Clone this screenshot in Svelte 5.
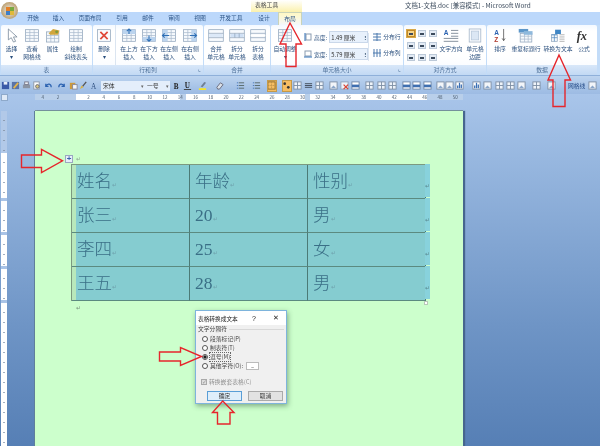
<script>
  const tabs = [['开始',24],['插入',27],['页面布局',36],['引用',28],['邮件',24],['审阅',28],['视图',24],['开发工具',38],['设计',28]];

  const groups = [
    { name: '表', w: 91, items: [
      { icon: 'cursor', l: ['选择', '▾'], w: 21 }, { icon: 'grid', l: ['查看', '网格线'], w: 20 },
      { icon: 'props', l: ['属性'], w: 21 }, { icon: 'diag', l: ['绘制', '斜线表头'], w: 26 } ] },
    { name: '行和列', w: 110, corner: true, items: [
      { icon: 'del', l: ['删除', '▾'], w: 23, sep: true }, { icon: 'above', l: ['在上方', '插入'], w: 20, ml: 3 },
      { icon: 'below', l: ['在下方', '插入'], w: 20 }, { icon: 'left', l: ['在左侧', '插入'], w: 20 },
      { icon: 'right', l: ['在右侧', '插入'], w: 20, ml: 1 } ] },
    { name: '合并', w: 66, items: [
      { icon: 'merge', l: ['合并', '单元格'], w: 21, ml: 1.5 }, { icon: 'split', l: ['拆分', '单元格'], w: 21 },
      { icon: 'tsplit', l: ['拆分', '表格'], w: 21 } ] }
  ];

  const dataItems = [
    { icon: 'sort', l: ['排序'], w: 22, ml: 2 }, { icon: 'repeat', l: ['重复标题行'], w: 30 },
    { icon: 'conv', l: ['转换为文本'], w: 34 }, { icon: 'fx', l: ['公式'], w: 18 }
  ];

  const leftTools = [['save',10],['saveas',10.5],['print',11],['preview',10.5],['undo',12],['redo',14],['paste',10],['brush',11],['font',10]];
  const midRaw = [['bold',176],['under',187],['hl',202],['clear',219],['list',240.7],['list',256.7],['border',272],['dots',287],['tbl',297.7],['bar',309],['tbl',320],['img',334],['del2',345],['tblb',356],['tbl',370],['tbl',381.7],['tbl',393],['tblb',406.7],['tblb',416.7],['tblb',428],['img',440.7],['img',450],['chart',460],['chart',476.7],['img',488],['tbl',500],['tbl',510.7],['img',521.7],['tbl',537],['img',552]];
  let prevEnd = 170;
  const midTools = midRaw.map(([k, c]) => {
    const ml = c - 5 - prevEnd;
    prevEnd = c + 5;
    return [k, 10, ml];
  });

  const rows = [['姓名','年龄','性别'],['张三','20','男'],['李四','25','女'],['王五','28','男']];
  const hTicks = ['4','2','','2','4','6','8','10','12','14','16','18','20','22','24','26','28','30','32','34','36','38','40','42','44','46','48','50'];
  const aligns = [0,1,2,3,4,5,6,7,8];
  const radios = [['段落标记(P)',false],['制表符(T)',false],['逗号(M)',true],['其他字符(O):',false]];
</script>

{#snippet glyph(k)}
  <svg viewBox="0 0 22 20" class="big">
    {#if k === 'cursor'}
      <path d="M6 1v15l4-3 3 6 3-1-3-6h5z" fill="#fff" stroke="#6d7f92"/>
    {:else if k === 'fx'}
      <text x="1" y="16" class="fx">fx</text>
    {:else if k === 'sort'}
      <text x="3" y="9" class="az a">A</text><text x="3" y="19.5" class="az z">Z</text>
      <path d="M16 1v16m-2-3l2 3 2-3" stroke="#444" fill="none"/>
    {:else if k === 'del'}
      <rect x="2" y="2" width="18" height="16" fill="#fbfcfe" stroke="#8ea3ba"/>
      <path d="M6 5l10 10M16 5L6 15" stroke="#e04a3a" stroke-width="2.4"/>
    {:else if k === 'props'}
      <rect x="2" y="5" width="17" height="14" fill="#f4f8fc" stroke="#8ea3ba"/>
      <path d="M2 10h17M2 14h17M8 5v14M13 5v14" stroke="#a9bace"/>
      <path d="M5 7l6-6 9 2-2 6H7z" fill="#d1a63e"/><circle cx="16" cy="5" r="2" fill="#7e9a3a"/>
    {:else if k === 'merge' || k === 'split' || k === 'tsplit'}
      <rect x="1" y="2" width="20" height="16" fill="#f7fafd" stroke="#8ea3ba"/>
      <path d="M1 7h20M1 13h20" stroke="#8ea3ba"/>
      {#if k === 'split'}<rect x="2" y="8" width="18" height="4" fill="#cfe0f5"/><path d="M8 7v6M14 7v6" stroke="#8ea3ba"/>{/if}
      {#if k === 'merge'}<rect x="2" y="8" width="18" height="4" fill="#dce9f8"/>{/if}
      {#if k === 'tsplit'}<rect x="1" y="9" width="20" height="2" fill="#fff"/>{/if}
    {:else if k === 'repeat'}
      <rect x="3" y="7" width="16" height="12" fill="#f7fafd" stroke="#8ea3ba"/><path d="M3 11h16M3 15h16M9 7v12M14 7v12" stroke="#a9bace"/>
      <rect x="1" y="1" width="13" height="5" fill="#5d97c9"/><rect x="8" y="4" width="12" height="5" fill="#8fb9dc"/>
    {:else if k === 'conv'}
      <rect x="2" y="9" width="8" height="9" fill="#f4f8fc" stroke="#8ea3ba"/>
      <path d="M13 9h7M13 12h7M13 15h7M13 18h7" stroke="#9a9a9a"/>
      <rect x="7" y="2" width="8" height="6" fill="#3f86c5"/><path d="M2 9h8M2 13h8M6 9v9" stroke="#4f8ac0"/>
    {:else}
      <rect x="2" y="2" width="18" height="16" fill="#f7fafd" stroke="#8ea3ba"/>
      <path d="M2 6h18M2 10h18M2 14h18M8 2v16M14 2v16" stroke="#a9bace"/>
      {#if k === 'above'}<rect x="2" y="2" width="18" height="6" fill="#bcd4ee"/><path d="M11 8V1m-3 3l3-3 3 3" stroke="#2f6fb5" fill="none" stroke-width="1.5"/>{/if}
      {#if k === 'below'}<rect x="2" y="12" width="18" height="6" fill="#bcd4ee"/><path d="M11 10v8m-3-3l3 3 3-3" stroke="#2f6fb5" fill="none" stroke-width="1.5"/>{/if}
      {#if k === 'left'}<rect x="2" y="2" width="7" height="16" fill="#bcd4ee"/><path d="M11 10H2m3-3l-3 3 3 3" stroke="#2f6fb5" fill="none" stroke-width="1.5"/>{/if}
      {#if k === 'right'}<rect x="13" y="2" width="7" height="16" fill="#bcd4ee"/><path d="M11 10h9m-3-3l3 3-3 3" stroke="#2f6fb5" fill="none" stroke-width="1.5"/>{/if}
    {/if}
  </svg>
{/snippet}

{#snippet tool(k, w = 10, ml = 0)}
  <span class="tool" class:on={k === 'border' || k === 'dots'} style="width:{w}px;margin-left:{ml}px">
    <svg viewBox="0 0 10 10">
      {#if k === 'save'}<rect x="1" y="1" width="8" height="8" fill="#3b5aa8"/><rect x="3" y="1" width="4" height="3" fill="#e8eef8"/>
      {:else if k === 'saveas'}<rect x="1" y="1" width="8" height="8" fill="#5a74a8"/><path d="M3 8l5-6" stroke="#e2b34a" stroke-width="2"/>
      {:else if k === 'print'}<rect x="1" y="4" width="8" height="4" fill="#8b94a3"/><rect x="3" y="1" width="4" height="3" fill="#eef1f6" stroke="#778"/>
      {:else if k === 'preview'}<rect x="2" y="1" width="6" height="8" fill="#fdfdfd" stroke="#8894a6"/><circle cx="6" cy="6" r="2" fill="#d8c77c" stroke="#667"/>
      {:else if k === 'undo'}<path d="M2 3v3h3M2 6c2-4 6-3 6 1" fill="none" stroke="#2b62b0" stroke-width="1.4"/>
      {:else if k === 'redo'}<path d="M8 3v3H5M8 6C6 2 2 3 2 7" fill="none" stroke="#2b62b0" stroke-width="1.4"/>
      {:else if k === 'paste'}<rect x="1" y="2" width="6" height="7" fill="#cc9a3e"/><rect x="4" y="4" width="5" height="5" fill="#f6f7fa" stroke="#889"/>
      {:else if k === 'brush'}<path d="M8 1L4 6" stroke="#555" stroke-width="1.5"/><path d="M1 9l2-4 2 2z" fill="#dcb23c"/>
      {:else if k === 'font'}<text x="1" y="9" class="mini">A</text>
      {:else if k === 'bold'}<text x="2" y="8.5" class="mini b">B</text>
      {:else if k === 'under'}<text x="2" y="8" class="mini b">U</text><path d="M1 9.5h8" stroke="#333"/>
      {:else if k === 'hl'}<path d="M3 6l4-5 2 1-4 5z" fill="#6f7f93"/><rect x="1" y="8" width="8" height="2" fill="#f5e52b"/>
      {:else if k === 'clear'}<path d="M2 7l4-5 3 2-4 5H3z" fill="#d9e0e9" stroke="#667"/>
      {:else if k === 'list'}<path d="M3 2h6M3 5h6M3 8h6" stroke="#566"/><path d="M1 2h1M1 5h1M1 8h1" stroke="#2b62b0"/>
      {:else if k === 'border'}<rect x="1" y="1" width="8" height="8" fill="none" stroke="#8a6a2a"/><path d="M1 5h8M5 1v8" stroke="#b28b45" stroke-dasharray="1 1"/>
      {:else if k === 'dots'}<circle cx="3" cy="3" r="1.5" fill="#333"/><circle cx="7" cy="7" r="1.5" fill="#333"/>
      {:else if k === 'bar'}<path d="M1 3h8M1 5h8M1 7h8" stroke="#3c4654"/>
      {:else if k === 'del2'}<rect x="1" y="1" width="8" height="8" fill="#eef3f9" stroke="#8ea3ba"/><path d="M4 4l5 5M9 4L4 9" stroke="#d9402f" stroke-width="1.3"/>
      {:else if k === 'tblb'}<rect x="1" y="1" width="8" height="8" fill="#fff" stroke="#6f87a6"/><rect x="1" y="4" width="8" height="3" fill="#3f6fb0"/>
      {:else if k === 'img'}<rect x="1" y="1" width="8" height="8" fill="#f2f5f9" stroke="#7d8ea4"/><path d="M2 8l3-3 3 3z" fill="#8aa6c9"/>
      {:else if k === 'chart'}<rect x="1" y="1" width="8" height="8" fill="#fff" stroke="#7d8ea4"/><path d="M3 8V5M5 8V2M7 8V4" stroke="#3b6fb3" stroke-width="1.4"/>
      {:else}<rect x="1" y="1" width="8" height="8" fill="#eef3f9" stroke="#7d8ea4"/><path d="M1 5h8M5 1v8" stroke="#7d8ea4"/>{/if}
    </svg>
  </span>
{/snippet}

{#snippet item(it)}
  <div class="item" class:sep={it.sep} style="width:{it.w}px;margin-left:{it.ml ?? 0}px">
    {@render glyph(it.icon)}
    {#each it.l as t}<span>{t}</span>{/each}
  </div>
{/snippet}

<div class="app">
  <header class="title">
    <div class="orb"><i></i><i></i><i></i><i></i></div>
    <div class="ctx">表格工具</div>
    <div class="doc">文档1-文档.doc [兼容模式] - Microsoft Word</div>
  </header>

  <nav class="tabs">
    {#each tabs as [t, w]}<span style="width:{w}px">{t}</span>{/each}
    <span class="layout">布局</span>
  </nav>

  <section class="ribbon">
    {#each groups as g}
      <div class="group" style="width:{g.w}px">
        <div class="items">{#each g.items as it}{@render item(it)}{/each}</div>
        <div class="gname">{g.name}{#if g.corner}<b>⌞</b>{/if}</div>
      </div>
    {/each}

    <div class="group size">
      <div class="items">
        <div class="item auto">{@render glyph('grid')}<span>自动调整</span><span>▾</span></div>
        <div class="dims">
          <div class="dim">
            <svg viewBox="0 0 8 8"><rect x="2" y="1" width="5" height="6" fill="#fff" stroke="#8a9bb0"/><path d="M1 0v8" stroke="#2f6fb5"/></svg>
            <em>高度:</em><span class="spin">1.49 厘米<b>⁝</b></span>
          </div>
          <div class="dim">
            <svg viewBox="0 0 8 8"><rect x="1" y="1" width="6" height="5" fill="#fff" stroke="#8a9bb0"/><path d="M0 7h8" stroke="#2f6fb5"/></svg>
            <em>宽度:</em><span class="spin">5.79 厘米<b>⁝</b></span>
          </div>
        </div>
        <div class="dist">
          <div><svg viewBox="0 0 8 8"><path d="M0 1h8M0 4h8M0 7h8M4 0v8" stroke="#4a78ad"/></svg>分布行</div>
          <div><svg viewBox="0 0 8 8"><path d="M1 0v8M4 0v8M7 0v8M0 4h8" stroke="#4a78ad"/></svg>分布列</div>
        </div>
      </div>
      <div class="gname">单元格大小<b>⌞</b></div>
    </div>

    <div class="group align">
      <div class="items">
        <div class="cells">
          {#each aligns as a}<i class:sel={a === 0}><u></u></i>{/each}
        </div>
        <div class="item tdir">
          <svg viewBox="0 0 22 20" class="big"><text x="1" y="10" class="az a">A</text><path d="M11 3h10M11 7h10M11 11h10M1 14h20M1 18h20" stroke="#5d6b7c"/></svg>
          <span>文字方向</span>
        </div>
        <div class="item tmargin">
          <svg viewBox="0 0 22 20" class="big"><rect x="3" y="1" width="16" height="18" fill="#f5f8fc" stroke="#9fb0c4"/><rect x="6" y="4" width="10" height="12" fill="#dce7f4" stroke="#b8c8da"/></svg>
          <span>单元格</span><span>边距</span>
        </div>
      </div>
      <div class="gname">对齐方式</div>
    </div>

    <div class="group data">
      <div class="items">{#each dataItems as it}{@render item(it)}{/each}</div>
      <div class="gname">数据</div>
    </div>
  </section>

  <section class="toolbar">
    {#each leftTools as [t, w]}{@render tool(t, w)}{/each}
    <span class="combo font">宋体<b>▾</b></span>
    <span class="combo sz">一号<b>▾</b></span>
    {#each midTools as [t, w, ml]}{@render tool(t, w, ml)}{/each}
    <span class="gridline">网格线</span>
    {@render tool('img', 10, 0)}
  </section>

  <main class="work">
    <div class="hruler">
      <span class="corner"></span>
      <div class="hbar">
        {#each hTicks as t}<span>{t}</span>{/each}
      </div>
    </div>

    <div class="body">
      <aside class="vruler">
        <i class="m1"></i><i class="w1"></i><i class="g"></i><i class="w2"></i><i class="g"></i><i class="w2"></i><i class="g"></i><i class="w2"></i><i class="g"></i><i class="w3"></i>
      </aside>

      <article class="page">
        <div class="anchorline"><span class="handle">+</span><span class="mark">↵</span></div>
        <div class="tablewrap">
          <div class="table">
            {#each rows as r}
              {#each r as c, i}
                <div class="cell" class:first={i === 0}>{c}<small>↵</small></div>
              {/each}
            {/each}
          </div>
          <div class="ends">
            {#each rows as r}<div>↵</div>{/each}
          </div>
        </div>
        <div class="resize"></div>
        <div class="after">↵</div>

        <div class="dialog">
          <div class="dtitle"><span>表格转换成文本</span><b>?</b><b class="x">✕</b></div>
          <div class="dbody">
            <div class="legend"><span>文字分隔符</span><hr /></div>
            {#each radios as [t, on]}
              <label class="radio" class:on>
                <i></i><span>{t}</span>
                {#if t.startsWith('其他')}<em>–</em>{/if}
              </label>
            {/each}
            <div class="check"><i>✓</i>转换嵌套表格(C)</div>
            <div class="btns"><button class="ok">确定</button><button>取消</button></div>
          </div>
        </div>
      </article>
    </div>
  </main>

  <svg class="arrows" viewBox="0 0 600 446">
    <path d="M21.5 155H41.5V149.5L62.5 160.8L41.5 172.5V167.5H21.5Z"/>
    <path d="M290 23L301.5 44H296V66.5H286V44H280Z"/>
    <path d="M559 55L570.5 80H565V106.5H553V80H548Z"/>
    <path d="M159.5 352H180.5V347.5L201.5 356.5L180.5 365.5V361H159.5Z"/>
    <path d="M222.7 401L234 412.5H230V424H217.5V412.5H212.5Z"/>
  </svg>
</div>

<style>
  :global(body) { margin: 0; background: #9fbde4; }
  .app {
    position: relative; width: 600px; height: 446px; overflow: hidden;
    font-family: "Noto Sans CJK SC", "Noto Sans", sans-serif; color: #25426b;
    display: flex; flex-direction: column; filter: blur(0.35px);
  }

  .title { height: 12px; background: #fff; position: relative; display: flex; flex: none; }
  .orb {
    position: absolute; left: 1px; top: 2px; width: 17px; height: 17px; border-radius: 50%; z-index: 2;
    background: radial-gradient(circle at 50% 50%, #f3f3ee, #b89b6a 75%, #7a6a55);
    display: grid; grid-template-columns: 4px 4px; grid-auto-rows: 4px; place-content: center;
  }
  .orb i { background: #e57f25; }
  .orb i:nth-child(2) { background: #78a940; }
  .orb i:nth-child(3) { background: #3f7fc6; }
  .orb i:nth-child(4) { background: #e0b93a; }
  .ctx {
    margin-left: 251px; width: 51px; height: 12px; line-height: 9px; font-size: 5.8px; text-indent: 4px; color: #444;
    background: linear-gradient(#fff, #fbf1ad);
  }
  .doc { margin-left: 103px; font-size: 6.4px; line-height: 11px; color: #3b4a5c; white-space: nowrap; }

  .tabs { height: 13px; flex: none; display: flex; background: #bcd8fb; font-size: 5.8px; line-height: 12px; padding-left: 21px; }
  .tabs span { display: block; text-align: center; flex: none; color: #2d5587; }
  .tabs .layout { width: 24px; background: linear-gradient(#fff8c4, #f4f7fb); border: 1px solid #c9d3b9; border-bottom: 0; box-sizing: border-box; }

  .ribbon {
    height: 50px; flex: none; display: flex; gap: 1px; padding-left: 1px; box-sizing: border-box;
    background: #c3dcf8;
  }
  .group {
    display: flex; flex-direction: column; flex: none; border-radius: 2px;
    background: linear-gradient(#f4f9ff, #fff 12%, #fff 60%, #f6faff);
  }
  .items { flex: 1; display: flex; min-height: 0; }
  .gname {
    height: 10px; flex: none; font-size: 5.8px; line-height: 9px; text-align: center; color: #4c6f98;
    background: linear-gradient(#d8e7f9, #c2d9f4); position: relative;
  }
  .gname b { position: absolute; right: 2px; top: -1px; font-weight: 400; font-size: 5.8px; }
  .item {
    display: flex; flex-direction: column; align-items: center; flex: none; box-sizing: border-box;
    font-size: 5.8px; line-height: 8px; color: #2a4f7d; white-space: nowrap;
  }
  .item.sep { border-right: 1px solid #dbe5f1; }
  .big { width: 16px; height: 15px; margin: 3px 0 2px; flex: none; }
  .fx { font: italic bold 17px "Liberation Serif", serif; fill: #333; }
  .az { font: bold 9px "Liberation Sans", sans-serif; }
  .az.a { fill: #2b62b0; } .az.z { fill: #b23a2e; }
  .mini { font: 8px "Liberation Serif", serif; fill: #2f4f7f; }
  .mini.b { font-weight: bold; fill: #222; }

  .size { width: 132px; }
  .auto { width: 28px; }
  .dims { display: flex; flex-direction: column; gap: 5px; margin: 6px 0 0 5px; flex: none; }
  .dim { display: flex; align-items: center; font-size: 5.8px; white-space: nowrap; height: 12px; }
  .dim svg { width: 8px; height: 8px; flex: none; }
  .dim em { font-style: normal; margin: 0 2px 0 2px; color: #2a4f7d; }
  .spin {
    width: 39px; height: 12px; line-height: 11px; box-sizing: border-box; background: #e8f1fc; border: 1px solid #cad8ea;
    font-size: 5.8px; padding-left: 1px; color: #333; display: flex; justify-content: space-between; white-space: nowrap; flex: none;
  }
  .spin b { font-weight: 700; color: #23415f; padding-right: 1px; }
  .dist {
    display: flex; flex-direction: column; gap: 8px; margin: 8px 0 0 0; padding-left: 4px; flex: none;
    font-size: 5.8px; line-height: 8px; color: #2a4f7d; white-space: nowrap; border-left: 1px solid #dbe5f1; height: 28px;
  }
  .dist div { display: flex; align-items: center; gap: 2px; }
  .dist svg { width: 8px; height: 8px; flex: none; }

  .align { width: 82px; }
  .align .items { padding-left: 3px; }
  .cells { display: grid; grid-template-columns: repeat(3, 8px); grid-auto-rows: 7px; column-gap: 3px; row-gap: 5px; width: 31px; height: 31px; margin-top: 5px; flex: none; }
  .cells i { display: block; background: #e3ebf5; border: 1px solid #bcc9d8; box-sizing: border-box; position: relative; }
  .cells i.sel { background: #f8d488; border-color: #c08a2a; outline: 1px solid #d8a848; }
  .cells u { position: absolute; left: 1px; right: 1px; top: 2px; height: 2px; background: #3b4a5c; display: block; }
  .tdir { width: 24px; margin-left: 1px; }
  .tmargin { width: 24px; }

  .data { width: 110px; }

  .toolbar {
    height: 19px; flex: none; display: flex; align-items: center; padding-top: 1px; box-sizing: border-box;
    background: linear-gradient(#bdd4ef, #a4c1e6 70%, #9dbbe3);
    border-top: 1px solid #8fb0da;
    white-space: nowrap; overflow: hidden;
  }
  .tool { height: 12px; display: flex; align-items: center; justify-content: center; flex: none; }
  .tool svg { width: 9px; height: 9px; }
  .tool.on { background: #f6bd62; outline: 1px solid #c49a4a; outline-offset: -1px; }
  .combo {
    height: 10px; line-height: 10px; background: #e4eefb; font-size: 5.8px; color: #333; flex: none; padding-left: 2px;
    box-sizing: border-box; display: flex; justify-content: space-between;
  }
  .combo b { font-size: 5px; font-weight: 400; color: #666; padding-right: 1px; }
  .font { width: 44px; margin-left: 2px; }
  .sz { width: 25px; }
  .gridline { font-size: 5.8px; color: #234a86; flex: none; margin-left: 11px; width: 20px; }

  .work { flex: 1; display: flex; flex-direction: column; min-height: 0; background: linear-gradient(#a9c5ea 0, #9dbce3 12%, #6f95c6 65%, #567fb5 100%); }
  .hruler { height: 17px; flex: none; display: flex; }
  .corner { width: 7px; height: 7px; margin: 0 0 0 1px; background: #dfe9f6; border: 1px solid #8ea9ca; box-sizing: border-box; }
  .hbar {
    margin-left: 27px; width: 428px; height: 6px; display: grid; grid-template-columns: repeat(28, 1fr);
    background: linear-gradient(90deg, #b9cfea 0, #b9cfea 41px, #fff 41px, #fff 145px, #b9cfea 145px, #b9cfea 151px, #fff 151px, #fff 270px, #b9cfea 270px, #b9cfea 275px, #fff 275px, #fff 392px, #b9cfea 392px);
    font-size: 4.5px; line-height: 6px; text-align: center; color: #4c5c6e; overflow: hidden;
  }
  .body { flex: 1; display: flex; min-height: 0; }
  .vruler { width: 6px; margin-left: 1px; display: flex; flex-direction: column; flex: none; }
  .vruler i { display: block; flex: none; }
  .m1 { height: 42px; background: repeating-linear-gradient(#b2c9e8 0 9px, #8d9db3 9px 10px); background-size: 2px 100%; background-position: center; background-repeat: no-repeat; background-color: #b2c9e8; }
  .w1, .w2, .w3 { background: repeating-linear-gradient(#fff 0 9px, #a3afc0 9px 10px); background-size: 2px 100%; background-position: center; background-repeat: no-repeat; background-color: #fff; }
  .w1 { height: 45px; }
  .w2 { height: 31px; }
  .w3 { height: 146px; }
  .g { height: 3px; background: #a9c3e6; }

  .page {
    margin-left: 28px; width: 428px; flex: none; position: relative; background: #ccffcc; padding-top: 42px; box-sizing: border-box;
    box-shadow: -1px 0 0 #5f7f9a, 2px 0 1px #46668e, 0 -1px 0 #7e9a9e;
  }
  .anchorline { height: 11px; display: flex; align-items: center; position: relative; padding-left: 41px; font-size: 6px; color: #8ea592; }
  .handle {
    position: absolute; left: 30px; top: 2px; width: 6px; height: 6px; border: 1px solid #9aa8c0; background: #e7eef9;
    color: #3a62a8; font: bold 8px/6px "Liberation Sans", sans-serif; text-align: center;
  }
  .tablewrap { display: flex; margin-left: 36px; }
  .table { display: grid; grid-template-columns: 118px 118px 118px; grid-auto-rows: 34px; border-top: 1px solid #7c9a80; border-left: 1px solid #7c9a80; width: 354px; box-sizing: border-box; }
  .cell {
    background: #85ccd0; border-right: 1px solid #4c7a76; border-bottom: 1px solid #5b8a80; box-sizing: border-box;
    font: 300 17.5px/33px "Liberation Serif", "Noto Sans CJK SC", serif; color: #3a6f86; padding-left: 5px; white-space: nowrap;
  }
  .cell.first { box-shadow: inset 4px 0 0 #b9e8bb; }
  .cell small { font: 6px "Liberation Sans", sans-serif; color: #6fa2ad; }
  .ends { display: flex; flex-direction: column; }
  .ends div { width: 5px; height: 33px; margin-bottom: 1px; background: #88d2dc; font-size: 6px; line-height: 44px; color: #5b8a92; overflow: hidden; }
  .resize { width: 2px; height: 2px; border: 1px solid #b8c9b8; background: #fff; margin-left: 389px; }
  .after { font-size: 6px; color: #7b947e; margin-left: 41px; line-height: 6px; }

  .dialog {
    position: absolute; left: 160px; top: 199px; width: 92px; height: 94px; background: #f0f0f0; border: 1px solid #7eb4dc; box-sizing: border-box;
    box-shadow: 1px 2px 5px rgba(40, 70, 50, 0.45); color: #333;
  }
  .dtitle { height: 14px; background: #fff; display: flex; align-items: center; font-size: 5.7px; padding-left: 2px; color: #222; }
  .dtitle span { width: 52px; white-space: nowrap; }
  .dtitle b { font: 400 7px "Liberation Sans", sans-serif; width: 8px; text-align: center; }
  .dtitle .x { margin-left: 14px; }
  .dbody { padding: 0 2px; font-size: 5.8px; line-height: 8px; }
  .legend { display: flex; align-items: center; gap: 2px; height: 8px; margin: 0 0 1px; white-space: nowrap; color: #444; }
  .legend hr { flex: 1; border: 0; border-top: 1px solid #d8d8d8; margin: 0; }
  .radio { display: flex; align-items: center; gap: 2px; height: 9px; margin-left: 4px; white-space: nowrap; color: #444; }
  .radio i { display: block; width: 6px; height: 6px; box-sizing: border-box; border: 1px solid #555; background: #fff; border-radius: 50%; flex: none; }
  .radio.on i { background: radial-gradient(circle, #222 0 1.4px, #fff 1.8px); }
  .radio.on span { outline: 1px dotted #666; }
  .radio em { font-style: normal; width: 13px; height: 8px; background: #fff; border: 1px solid #bbb; text-align: center; line-height: 7px; margin-left: 1px; flex: none; box-sizing: border-box; }
  .check { display: flex; align-items: center; gap: 2px; margin: 8px 0 0 3px; color: #8f8f8f; white-space: nowrap; height: 8px; }
  .check i { display: block; width: 6px; height: 6px; background: #ddd; border: 1px solid #aaa; font: 6px/5px "Liberation Sans", sans-serif; color: #999; box-sizing: border-box; flex: none; }
  .btns { display: flex; justify-content: space-between; margin: 5px 1px 0 9px; }
  button { width: 35px; height: 10px; padding: 0; font: 5.8px/8px "Noto Sans CJK SC", sans-serif; background: #e2e2e2; border: 1px solid #aaa; color: #333; }
  button.ok { background: #dfeefa; border-color: #5a9ed6; }

  .arrows { position: absolute; inset: 0; width: 600px; height: 446px; pointer-events: none; }
  .arrows path { fill: none; stroke: #e6262c; stroke-width: 1.4; }
</style>
